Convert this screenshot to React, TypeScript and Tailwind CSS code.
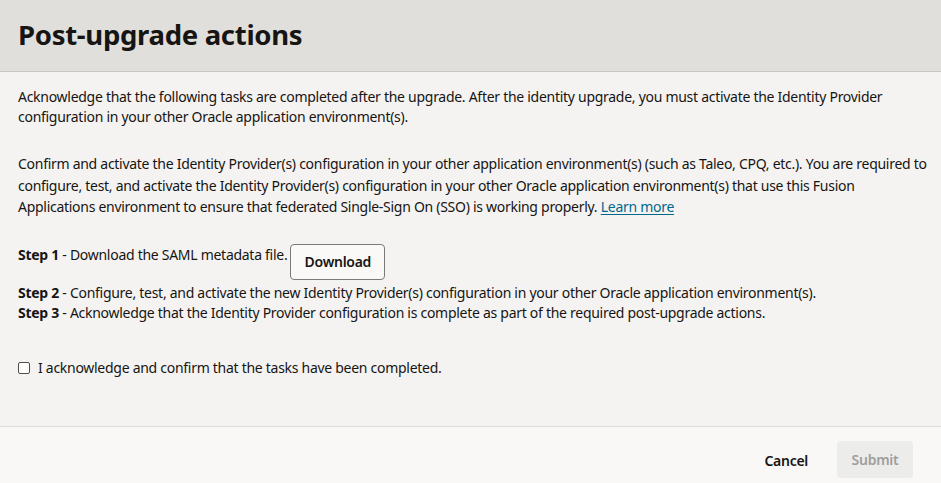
export default function App() {
  return (
    <div className="flex h-[483px] w-[941px] flex-col bg-[#f5f3f2] font-['Noto_Sans',sans-serif] text-[14px] tracking-[-0.28px] text-[#161513]">
      <header className="flex h-[72px] shrink-0 items-center border-b border-[#c9c7c3] bg-[#e0dfdb] px-[18px]">
        <h1 className="pb-[2px] text-[27.5px] font-bold tracking-[-0.3px] text-[#161513]">Post-upgrade actions</h1>
      </header>

      <main className="flex-1 pl-[18px] pr-[10px] pt-[15px] leading-[20px]">
        <p>
          Acknowledge that the following tasks are completed after the upgrade. After the identity upgrade, you must
          activate the Identity Provider configuration in your other Oracle application environment(s).
        </p>
        <p className="mt-[26px] leading-[21.5px]">
          Confirm and activate the Identity Provider(s) configuration in your other application environment(s) (such as
          Taleo, CPQ, etc.). You are required to configure, test, and activate the Identity Provider(s) configuration in
          your other Oracle application environment(s) that use this Fusion Applications environment to ensure that
          federated Single-Sign On (SSO) is working properly.{" "}
          <a href="#" className="text-[#00688c] underline underline-offset-2">
            Learn more
          </a>
        </p>

        <div className="mt-[26px] flex items-start gap-[3px]">
          <span className="mt-[1px]">
            <b>Step 1</b> - Download the SAML metadata file.
          </span>
          <button className="h-[36px] w-[95px] rounded-[4px] border border-[#7c7a77] bg-[#fbf9f8] font-semibold">
            Download
          </button>
        </div>
        <p className="mt-[3px]">
          <b>Step 2</b> - Configure, test, and activate the new Identity Provider(s) configuration in your other Oracle
          application environment(s).
        </p>
        <p>
          <b>Step 3</b> - Acknowledge that the Identity Provider configuration is complete as part of the required
          post-upgrade actions.
        </p>

        <label className="mt-[35px] flex items-center gap-[8px]">
          <span className="h-[12px] w-[12px] rounded-[2px] border border-[#4f4d4a] bg-white" />
          <span>I acknowledge and confirm that the tasks have been completed.</span>
        </label>
      </main>

      <footer className="flex h-[57px] shrink-0 items-start justify-end gap-[29px] border-t border-[#dedcd9] bg-[#f9f8f7] pr-[28px] pt-[14px]">
        <button className="mt-[9px] font-semibold text-[#161513]">Cancel</button>
        <button className="h-[37px] w-[76px] rounded-[4px] bg-[#ececeb] font-semibold text-[#a09e9b]">Submit</button>
      </footer>
    </div>
  );
}
